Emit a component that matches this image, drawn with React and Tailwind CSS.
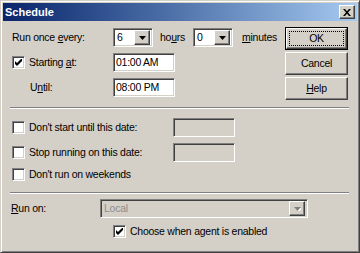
const sunken =
  "border border-t-[#808080] border-l-[#808080] border-r-white border-b-white shadow-[inset_1px_1px_0_#404040,inset_-1px_-1px_0_#d4d0c8]";
const raised =
  "border border-t-white border-l-white border-r-[#404040] border-b-[#404040] shadow-[inset_-1px_-1px_0_#808080,inset_1px_1px_0_#d4d0c8]";

function Arrow({ disabled }) {
  return (
    <svg width="7" height="4" viewBox="0 0 7 4">
      {disabled && <path d="M1 1h7l-3.5 4z" fill="#fff" />}
      <path d="M0 0h7l-3.5 4z" fill={disabled ? "#808080" : "#000"} />
    </svg>
  );
}

function Combo({ value, width, disabled }) {
  return (
    <div
      className={`${sunken} h-[19px] flex items-center p-[2px] ${disabled ? "bg-[#d4d0c8]" : "bg-white"}`}
      style={{ width }}
    >
      <span className={`flex-1 pl-[1px] ${disabled ? "text-[#8c8c8c]" : ""}`}>{value}</span>
      <div className={`${raised} w-[16px] h-[15px] bg-[#d4d0c8] flex items-center justify-center`}>
        <Arrow disabled={disabled} />
      </div>
    </div>
  );
}

function Field({ value, disabled }) {
  return (
    <div
      className={`${sunken} w-[62px] h-[19px] flex items-center pl-[2px] ${disabled ? "bg-[#d4d0c8]" : "bg-white"}`}
    >
      {value}
    </div>
  );
}

function Check({ checked }) {
  return (
    <div className={`${sunken} w-[13px] h-[13px] bg-white flex items-center justify-center shrink-0`}>
      {checked && (
        <svg width="7" height="7" viewBox="0 0 7 7">
          <path d="M0 2v3l2 2l5-5v-3l-5 5z" fill="#000" />
        </svg>
      )}
    </div>
  );
}

function Button({ children, isDefault }) {
  if (isDefault) {
    return (
      <div className="w-[63px] h-[23px] border border-black">
        <div className={`${raised} w-full h-full bg-[#d4d0c8] p-[2px]`}>
          <div className="w-full h-full border border-dotted border-black flex items-center justify-center">
            {children}
          </div>
        </div>
      </div>
    );
  }
  return (
    <div className={`${raised} w-[63px] h-[23px] bg-[#d4d0c8] flex items-center justify-center`}>
      {children}
    </div>
  );
}

function Separator() {
  return <div className="ml-[7px] mr-[8px] h-[2px] border-t border-t-[#808080] border-b border-b-white" />;
}

export default function App() {
  return (
    <div className="w-[360px] h-[253px] bg-[#d4d0c8] border border-t-[#d4d0c8] border-l-[#d4d0c8] border-r-[#404040] border-b-[#404040] shadow-[inset_1px_1px_0_#fff,inset_-1px_-1px_0_#808080] p-[2px] text-[10.5px] tracking-[-0.25px] leading-none text-black font-['Liberation_Sans',Arial,sans-serif] select-none">
      {/* title bar */}
      <div className="h-[18px] bg-linear-to-r from-[#0a246a] to-[#a6caf0] flex items-center justify-between pl-[2px] pr-[2px]">
        <span className="text-white font-bold text-[11px] tracking-normal">Schedule</span>
        <div className={`${raised} w-[16px] h-[14px] bg-[#d4d0c8] flex items-center justify-center`}>
          <svg width="8" height="7" viewBox="0 0 8 7">
            <path d="M0 0h2l2 2.2L6 0h2L5 3.5L8 7H6L4 4.8L2 7H0l3-3.5z" fill="#000" />
          </svg>
        </div>
      </div>

      {/* top section */}
      <div className="flex pt-[6px] pl-[9px]">
        <div className="w-[273px] pt-[1px] flex flex-col gap-[6px]">
          <div className="flex items-center h-[19px]">
            <span className="w-[101px]">
              Run once <u>e</u>very:
            </span>
            <Combo value="6" width={40} />
            <span className="ml-[7px] w-[33px]">
              ho<u>u</u>rs
            </span>
            <Combo value="0" width={40} />
            <span className="ml-[9px]">
              <u>m</u>inutes
            </span>
          </div>
          <div className="flex items-center h-[19px]">
            <Check checked />
            <span className="ml-[4px] w-[84px]">
              Starting <u>a</u>t:
            </span>
            <Field value="01:00 AM" />
          </div>
          <div className="flex items-center h-[19px]">
            <span className="pl-[18px] w-[101px]">
              U<u>n</u>til:
            </span>
            <Field value="08:00 PM" />
          </div>
        </div>
        <div className="flex flex-col gap-[2px]">
          <Button isDefault>OK</Button>
          <Button>Cancel</Button>
          <Button>
            <span>
              <u>H</u>elp
            </span>
          </Button>
        </div>
      </div>

      <div className="mt-[7px]">
        <Separator />
      </div>

      {/* date options */}
      <div className="pl-[9px] mt-[9px] flex flex-col gap-[6px]">
        <div className="flex items-center h-[19px]">
          <Check />
          <span className="ml-[4px] w-[144px]">Don't start until this date:</span>
          <Field disabled />
        </div>
        <div className="flex items-center h-[19px]">
          <Check />
          <span className="ml-[4px] w-[144px]">Stop running on this date:</span>
          <Field disabled />
        </div>
        <div className="flex items-center h-[13px]">
          <Check />
          <span className="ml-[4px]">Don't run on weekends</span>
        </div>
      </div>

      <div className="mt-[11px]">
        <Separator />
      </div>

      {/* run on */}
      <div className="pl-[8px] mt-[5px] flex items-center h-[19px]">
        <span className="w-[89px]">
          <u>R</u>un on:
        </span>
        <Combo value="Local" width={208} disabled />
      </div>
      <div className="pl-[110px] mt-[7px] flex items-center h-[13px]">
        <Check checked />
        <span className="ml-[4px]">Choose when agent is enabled</span>
      </div>
    </div>
  );
}
